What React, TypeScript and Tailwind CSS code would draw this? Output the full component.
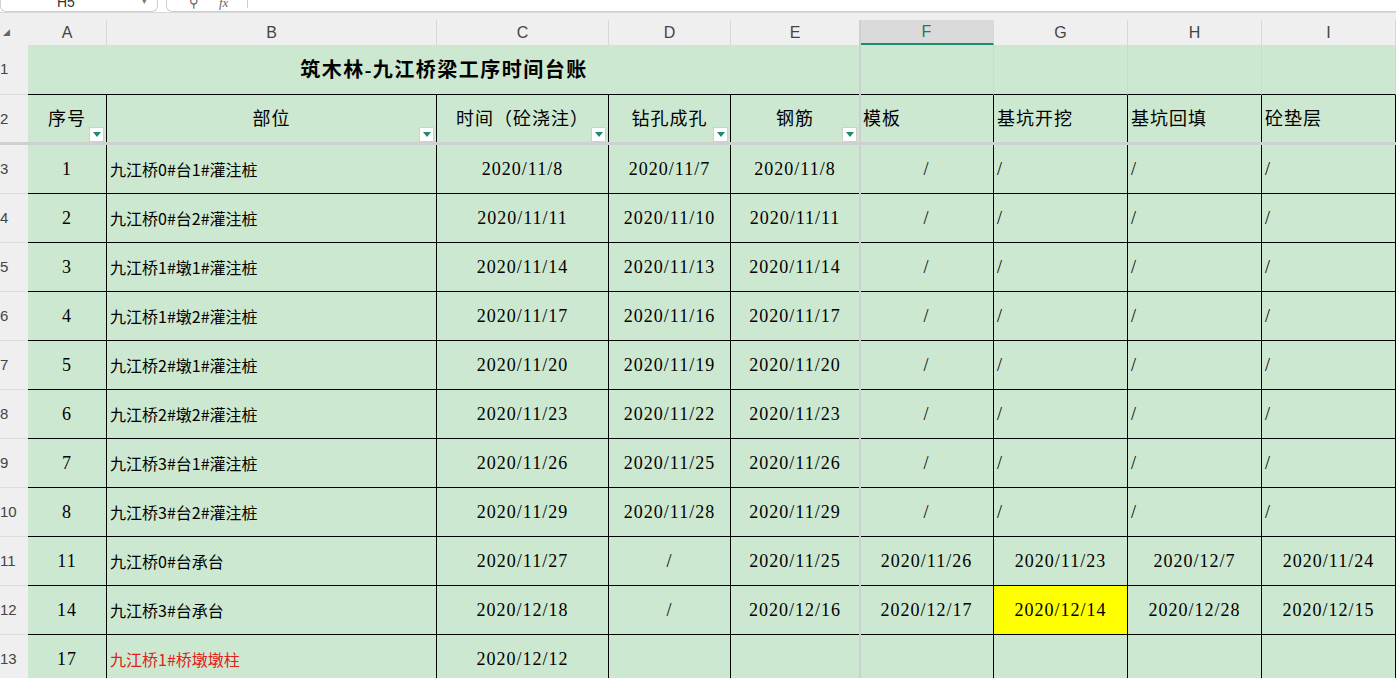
import React from "react";

const cols = [79, 330, 172, 122, 129, 134, 134, 134, 134];
const letters = ["A", "B", "C", "D", "E", "F", "G", "H", "I"];
const serif = { fontFamily: '"Liberation Serif", "Noto Sans CJK SC", serif' };
const cjk = { fontFamily: '"Noto Sans CJK SC", "Liberation Sans", sans-serif' };

const rows: string[][] = [
  ["1", "九江桥0#台1#灌注桩", "2020/11/8", "2020/11/7", "2020/11/8", "/", "/", "/", "/"],
  ["2", "九江桥0#台2#灌注桩", "2020/11/11", "2020/11/10", "2020/11/11", "/", "/", "/", "/"],
  ["3", "九江桥1#墩1#灌注桩", "2020/11/14", "2020/11/13", "2020/11/14", "/", "/", "/", "/"],
  ["4", "九江桥1#墩2#灌注桩", "2020/11/17", "2020/11/16", "2020/11/17", "/", "/", "/", "/"],
  ["5", "九江桥2#墩1#灌注桩", "2020/11/20", "2020/11/19", "2020/11/20", "/", "/", "/", "/"],
  ["6", "九江桥2#墩2#灌注桩", "2020/11/23", "2020/11/22", "2020/11/23", "/", "/", "/", "/"],
  ["7", "九江桥3#台1#灌注桩", "2020/11/26", "2020/11/25", "2020/11/26", "/", "/", "/", "/"],
  ["8", "九江桥3#台2#灌注桩", "2020/11/29", "2020/11/28", "2020/11/29", "/", "/", "/", "/"],
  ["11", "九江桥0#台承台", "2020/11/27", "/", "2020/11/25", "2020/11/26", "2020/11/23", "2020/12/7", "2020/11/24"],
  ["14", "九江桥3#台承台", "2020/12/18", "/", "2020/12/16", "2020/12/17", "2020/12/14", "2020/12/28", "2020/12/15"],
  ["17", "九江桥1#桥墩墩柱", "2020/12/12", "", "", "", "", "", ""],
];

const headers = ["序号", "部位", "时间（砼浇注）", "钻孔成孔", "钢筋", "模板", "基坑开挖", "基坑回填", "砼垫层"];

function Filter() {
  return (
    <span className="absolute right-[2px] bottom-[2px] w-[15px] h-[15px] bg-white border border-[#d0d0d0] flex items-center justify-center">
      <span className="w-0 h-0 border-l-[4px] border-r-[4px] border-t-[5px] border-l-transparent border-r-transparent border-t-[#1e8a6e]" />
    </span>
  );
}

function RowHead({ n, h }: { n: string; h: number }) {
  return (
    <div className="w-[28px] shrink-0 bg-[#efefef] border-b border-[#dcdcdc] flex items-center text-[15px] text-[#444]" style={{ height: h, fontFamily: '"Liberation Sans", sans-serif' }}>
      {n}
    </div>
  );
}

export default function App() {
  return (
    <div className="w-[1396px] h-[678px] overflow-hidden bg-[#efefef] relative">
      <div className="h-[12px] bg-white flex">
        <div className="w-[158px] h-[12px] border border-t-0 border-[#cfcfcf] rounded-b-md relative bg-white">
          <span className="absolute left-[56px] -top-[8px] text-[14px] text-[#333]" style={{ fontFamily: '"Liberation Sans", sans-serif' }}>H5</span>
          <span className="absolute right-[10px] -top-[6px] text-[9px] text-[#777]">▾</span>
        </div>
        <div className="ml-[8px] flex-1 h-[12px] border border-t-0 border-r-0 border-[#cfcfcf] rounded-bl-md relative bg-white">
          <span className="absolute left-[22px] -top-[7px] text-[13px] text-[#666]">⚲</span>
          <span className="absolute left-[52px] -top-[7px] text-[13px] italic text-[#666]" style={serif}>fx</span>
          <span className="absolute left-[80px] top-0 w-px h-[8px] bg-[#ccc]" />
        </div>
      </div>
      <div className="h-[8px] bg-[#efefef] border-t border-[#d8d8d8]" />
      <div className="flex h-[25px]" style={{ fontFamily: '"Liberation Sans", sans-serif' }}>
        <div className="w-[28px] shrink-0 flex items-center justify-start pl-[3px] text-[9px] text-[#666]">◢</div>
        {cols.map((w, i) => (
          <div key={i} className={`shrink-0 flex items-center justify-center text-[16px] border-r border-[#d8d8d8] ${i === 5 ? "bg-[#dadada] text-[#1e7a5e] border-b-2 border-b-[#1e8a6e]" : "text-[#444]"}`} style={{ width: w }}>
            {letters[i]}
          </div>
        ))}
      </div>
      <div className="flex h-[50px]">
        <RowHead n="1" h={50} />
        <div className="w-[832px] shrink-0 bg-[#cde8d0] border-b border-black flex items-center justify-center font-bold text-[20px] tracking-[1.5px] text-black" style={serif}>
          筑木林-九江桥梁工序时间台账
        </div>
        {cols.slice(5).map((w, i) => (
          <div key={i} className="shrink-0 bg-[#cde8d0] border-r border-[#d4d4d4] border-b border-b-black" style={{ width: w }} />
        ))}
      </div>
      <div className="flex h-[49px]">
        <RowHead n="2" h={49} />
        {cols.map((w, i) => (
          <div key={i} className={`relative shrink-0 bg-[#cde8d0] border-r border-black flex items-center text-[18px] tracking-[1px] text-black ${i < 5 ? "justify-center" : "pl-[3px]"}`} style={{ width: w, ...serif }}>
            {headers[i]}
            {i < 5 && <Filter />}
          </div>
        ))}
      </div>
      <div className="h-[3px] bg-[#d0d0d0] -mt-[2px] relative" />
      {rows.map((r, ri) => (
        <div key={ri} className="flex h-[49px]">
          <RowHead n={String(ri + 3)} h={49} />
          {r.map((v, i) => {
            const left = i === 1 || (i >= 6 && ri < 8);
            const yellow = ri === 9 && i === 6;
            const red = ri === 10 && i === 1;
            return (
              <div
                key={i}
                className={`shrink-0 border-r border-b border-black flex items-center ${left ? "pl-[3px]" : "justify-center"} ${yellow ? "bg-[#ffff00]" : "bg-[#cde8d0]"} ${red ? "text-[#e0201a]" : "text-black"} ${i === 1 ? "text-[16px]" : "text-[18px] tracking-[1px]"}`}
                style={{ width: cols[i], ...(i === 1 ? cjk : serif) }}
              >
                {v}
              </div>
            );
          })}
        </div>
      ))}
      <div className="absolute left-[859px] top-[20px] w-[2px] h-[658px] bg-[#cfcfcf]" />
    </div>
  );
}
